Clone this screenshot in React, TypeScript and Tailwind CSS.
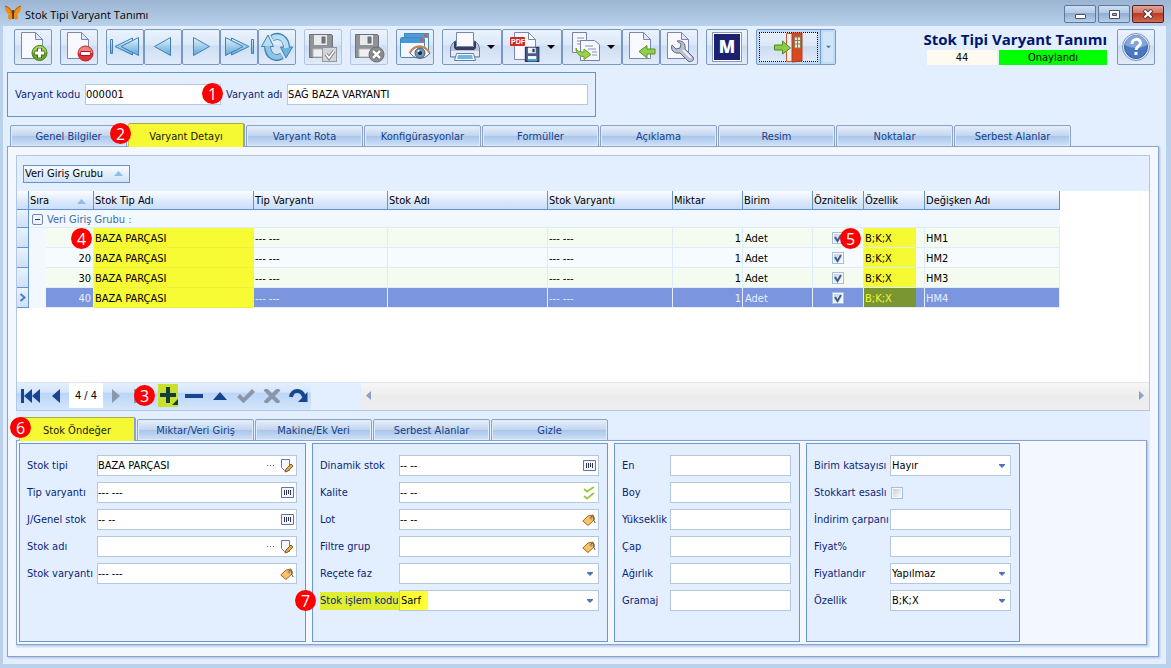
import React, { useState } from 'react';
import clsx from 'clsx';

type Trailing = 'edit' | 'code' | 'tag' | 'check';

interface FieldProps {
    id: string;
    label: string;
    labelWidth: string;
    value?: string;
    trailing?: Trailing;
    options?: string[];
    marked?: boolean;
}

interface VariantRow {
    order: number;
    variable: string;
}

const MAIN_TABS = [
    'Genel Bilgiler',
    'Varyant Detayı',
    'Varyant Rota',
    'Konfigürasyonlar',
    'Formüller',
    'Açıklama',
    'Resim',
    'Noktalar',
    'Serbest Alanlar',
];

const DETAIL_TABS = ['Stok Öndeğer', 'Miktar/Veri Giriş', 'Makine/Ek Veri', 'Serbest Alanlar', 'Gizle'];

const ROWS: VariantRow[] = [
    { order: 10, variable: 'HM1' },
    { order: 20, variable: 'HM2' },
    { order: 30, variable: 'HM3' },
    { order: 40, variable: 'HM4' },
];

const HEADERS = [
    'Stok Tip Adı',
    'Tip Varyantı',
    'Stok Adı',
    'Stok Varyantı',
    'Miktar',
    'Birim',
    'Öznitelik',
    'Özellik',
    'Değişken Adı',
];

/* ---------- Toolbar icons ---------- */

function Svg({ children, w = 32 }: { children: React.ReactNode; w?: number }) {
    return (
        <svg width={w} height="32" viewBox={`0 0 ${w} 32`} fill="none" aria-hidden="true" className="shrink-0">
            {children}
        </svg>
    );
}

function Sheet() {
    return (
        <>
            <path d="M4.500 1.500h14l7 7v19h-21z" fill="#f7f9fe" stroke="#7c86b4" />
            <path d="M18.500 1.500v7h7z" fill="#dfe6f5" stroke="#7c86b4" strokeLinejoin="round" />
        </>
    );
}

function NewIcon() {
    return (
        <Svg>
            <Sheet />
            <circle cx="22.500" cy="22" r="7.500" fill="#6da52c" stroke="#457a16" />
            <path d="M15.500 21.500a7 6.500 0 0 1 14 0z" fill="#a4d05c" />
            <path d="M22.500 17v10M17.500 22h10" stroke="#3c6d14" strokeWidth="5" />
            <path d="M22.500 17.500v9M18 22h9" stroke="#fff" strokeWidth="3" />
        </Svg>
    );
}

function DeleteIcon() {
    return (
        <Svg>
            <Sheet />
            <circle cx="22.500" cy="22.500" r="7.500" fill="#e23238" stroke="#b51f26" />
            <path d="M15.500 22a7 6.500 0 0 1 14 0z" fill="#f58083" />
            <path d="M17.500 22.500h10" stroke="#a1191f" strokeWidth="5" />
            <path d="M18 22.500h9" stroke="#fff" strokeWidth="3" />
        </Svg>
    );
}

function ArrowIcon({ kind }: { kind: 'first' | 'prev' | 'next' | 'last' }) {
    const flip = kind === 'next' || kind === 'last';
    const edge = kind === 'first' || kind === 'last';
    return (
        <Svg>
            <defs>
                <linearGradient id={`arrow-${kind}`} x1="0" y1="0" x2="0" y2="1">
                    <stop offset="0" stopColor="#e2f3fc" />
                    <stop offset="1" stopColor="#5fa6d6" />
                </linearGradient>
            </defs>
            <g
                transform={flip ? 'translate(32 0) scale(-1 1)' : undefined}
                fill={`url(#arrow-${kind})`}
                stroke="#3f80b8"
                strokeLinejoin="round"
            >
                {edge ? (
                    <>
                        <rect x="1.500" y="8.500" width="2" height="14" />
                        <path d="M23.500 7v17L6 15.500z" />
                        <path d="M29.500 6.500v18L12 15.500z" />
                    </>
                ) : (
                    <path d="M23.500 6.500v18L7.500 15.500z" />
                )}
            </g>
        </Svg>
    );
}

function RefreshIcon() {
    return (
        <Svg>
            <path d="M11 7c7-4 14 0 14.500 9" stroke="#3f80b3" strokeWidth="7" />
            <path d="M19.500 16h12L25 27z" fill="#6fb2dd" stroke="#3f80b3" strokeLinejoin="round" />
            <path d="M11.500 7c7-3 13 0 14 10" stroke="#b7def3" strokeWidth="5" />
            <path d="M21 25c-7 4-14 0-14.500-9" stroke="#3f80b3" strokeWidth="7" />
            <path d="M.500 15.500h12L7 4z" fill="#b7def3" stroke="#3f80b3" strokeLinejoin="round" />
            <path d="M20.500 25c-7 3-13 0-14-10" stroke="#8cc5e6" strokeWidth="5" />
        </Svg>
    );
}

function Floppy({ body = '#8f9297', dark = '#6d7076' }) {
    return (
        <>
            <path d="M2.500 3.500h22l1 1v22h-23z" fill={body} stroke={dark} />
            <path d="M7 4h13v10H7z" fill="#e9eaec" />
            <path d="M14.500 5.500h4v7h-4z" fill={dark} />
            <path d="M6 18h16v8H6z" fill="#f0f0f1" stroke="#b5b6b9" />
        </>
    );
}

function SaveIcon({ mark }: { mark: 'ok' | 'cancel' }) {
    return (
        <Svg>
            <Floppy />
            {mark === 'ok' ? (
                <>
                    <rect x="15.500" y="16.500" width="14" height="14" fill="#d3d4d7" stroke="#94969b" />
                    <path d="M19 23l3 4 5-7" stroke="#808288" strokeWidth="3.500" />
                    <path d="M19 23l3 4 5-7" stroke="#fff" strokeWidth="1.500" />
                </>
            ) : (
                <>
                    <circle cx="23.500" cy="23.500" r="7.500" fill="#8b8d91" stroke="#6a6c70" />
                    <path d="M20 20l7 7M27 20l-7 7" stroke="#5f6165" strokeWidth="4" />
                    <path d="M20 20l7 7M27 20l-7 7" stroke="#fff" strokeWidth="2.500" />
                </>
            )}
        </Svg>
    );
}

function PreviewIcon() {
    return (
        <Svg>
            <rect x="5.500" y="2.500" width="24" height="20" fill="#edf4fc" stroke="#4c86ba" />
            <path d="M6 3h23v4H6z" fill="#4d9bd8" />
            <path d="M25 3.500h3v2h-3z" fill="#ee4e2c" />
            <rect x="1.500" y="6.500" width="24" height="20" rx="1" fill="#f4f8fe" stroke="#4c86ba" />
            <path d="M2 7h23v5H2z" fill="#4199dc" />
            <path d="M21 8h3v2h-3z" fill="#ee4e2c" />
            <path d="M11 22c5-8 14-8 20 0-5 7-15 7-20 0z" fill="#fff" stroke="#5c6069" />
            <path d="M10.500 22c5-9 15-9 20 0" stroke="#ca8750" strokeWidth="2" />
            <circle cx="21" cy="22" r="5" fill="#7294b8" stroke="#3b5c82" />
            <circle cx="21" cy="22" r="2" fill="#18263a" />
            <circle cx="19.500" cy="20" r="1" fill="#fff" />
        </Svg>
    );
}

function PrintIcon() {
    return (
        <Svg>
            <path d="M3 13l3-3h20l3 3 1.500 4v9h-29v-9z" fill="#b9c3da" stroke="#6d7aa1" />
            <path d="M2 20h28v5H2z" fill="#e6ebf5" />
            <path d="M7.500 1.500h17v14h-17z" fill="#f7f9fe" stroke="#7885ae" />
            <path d="M5 11l2-1v6h18v-6l2 1v6l-2 2H7l-2-2z" fill="#343e5c" />
            <path d="M7.500 22.500h17l2 7h-21z" fill="#f6f9fe" stroke="#6b7ba5" />
            <path d="M9 24h14l1 4H8z" fill="#6db7e8" />
        </Svg>
    );
}

function PdfIcon() {
    return (
        <Svg>
            <path d="M5.500 1.500h14l7 7v20h-21z" fill="#f7f9fe" stroke="#7c86b4" />
            <path d="M19.500 1.500v7h7z" fill="#fff" stroke="#7c86b4" />
            <rect x="1" y="6" width="15" height="9" rx="1" fill="#d22a28" />
            <text x="2" y="13" fill="#fff" fontSize="7" fontWeight="bold" fontFamily="Liberation Sans, sans-serif">PDF</text>
            <g transform="translate(15 15) scale(.56)">
                <path d="M2.500 2.500h24v25h-24z" fill="#4a5c86" stroke="#26365c" strokeWidth="2" />
                <path d="M7 3h14v10H7z" fill="#f0f3f9" />
                <path d="M15 5h4v6h-4z" fill="#26365c" />
                <path d="M7 18h15v9H7z" fill="#fff" />
                <path d="M7 23h15v4H7z" fill="#49a2dd" />
            </g>
        </Svg>
    );
}

function CopyIcon() {
    return (
        <Svg>
            <path d="M3.500 1.500h14v20h-14z" fill="#f5f7fd" stroke="#7681ad" />
            <path d="M8 7h7M8 10h5M8 13h3" stroke="#8590b5" />
            <path d="M11.500 9.500h14l5 4v16h-19z" fill="#f5f7fd" stroke="#7681ad" />
            <path d="M16 15h8M19 18h8M23 21h5M23 24h5" stroke="#8590b5" />
            <path d="M7 17c1 3 3 4 8 4v-3l7 5.500-7 5v-3c-5 0-8-3-8-8.500z" fill="#9ad04a" stroke="#6a9f2c" strokeLinejoin="round" />
        </Svg>
    );
}

function ImportIcon() {
    return (
        <Svg>
            <Sheet />
            <path d="M14 20.500l8-6v3.500h8v5h-8v4z" fill="#93cf4f" stroke="#568e22" strokeLinejoin="round" />
        </Svg>
    );
}

function WrenchIcon() {
    return (
        <Svg>
            <Sheet />
            <path
                d="M9 14l4 4 4-1 1-4-4-3c5-1 9 2 8 8l8 8c2 3-2 6-5 4l-8-8c-6 1-10-3-8-8z"
                fill="#b9bfd0"
                stroke="#5f6884"
                strokeLinejoin="round"
            />
            <path d="M20 19l8 8" stroke="#eef0f6" strokeWidth="2" />
        </Svg>
    );
}

function ExitIcon() {
    return (
        <Svg>
            <path d="M13.500 2.500h8v28h-8z" fill="#eaf1fb" stroke="#d4552e" />
            <path d="M19 2h10v28l-10 1z" fill="#d54a20" stroke="#b63c18" />
            <path d="M21.500 6h6v11h-6z" fill="#eee9cf" stroke="#8f7a54" />
            <path d="M24.500 6v11M21.500 9.500h6M21.500 13h6" stroke="#8f7a54" />
            <path d="M1.500 14h8v-4l8 7-8 6v-4h-8z" fill="#8ccb45" stroke="#4e8b24" strokeLinejoin="round" />
        </Svg>
    );
}

function HelpIcon() {
    return (
        <Svg>
            <circle cx="16" cy="16" r="13.500" fill="#e4ebf6" stroke="#7d93bd" />
            <circle cx="16" cy="16" r="11.500" fill="#4a78c0" stroke="#3a62a6" />
            <path d="M5 14a11 10 0 0 1 22 0c-7 4-15 4-22 0z" fill="#82a5dc" />
            <path d="M12 13c0-6 8.500-6 8.500-1 0 3.500-4.500 3-4.500 7" stroke="#fff" strokeWidth="3" />
            <path d="M14.500 21h3v3h-3z" fill="#fff" />
        </Svg>
    );
}

function ButterflyIcon() {
    return (
        <svg width="16" height="16" viewBox="0 0 16 16" aria-hidden="true">
            <path d="M8 8C7 4 3 1 0 1c0 4 1 7 4 8-2 2-1 5 1 6 2-1 3-4 3-6 0 2 1 5 3 6 2-1 3-4 1-6 3-1 4-4 4-8-3 0-7 3-8 7z" fill="#f08c14" />
            <path d="M0 1c3 1 6 3 7 7M16 1c-3 1-6 3-7 7" fill="none" stroke="#a35a14" />
            <path d="M8 5v9" stroke="#332010" strokeWidth="1.500" />
        </svg>
    );
}

/* ---------- Small building blocks ---------- */

function Caret({ className = 'text-black' }: { className?: string }) {
    return (
        <svg width="8" height="4" viewBox="0 0 8 4" className={className} aria-hidden="true">
            <path d="M0 0h8L4 4z" fill="currentColor" />
        </svg>
    );
}

function Badge({ n, className }: { n: number; className: string }) {
    return (
        <span
            className={clsx(
                'absolute z-10 flex size-[21px] items-center justify-center rounded-full bg-[#fe0000] font-["Open_Sans",sans-serif] text-[16px] leading-none text-white',
                className
            )}
        >
            {n}
        </span>
    );
}

function ToolButton({
    label,
    children,
    caret,
    disabled,
    className = 'w-[38px]',
}: {
    label: string;
    children: React.ReactNode;
    caret?: boolean;
    disabled?: boolean;
    className?: string;
}) {
    return (
        <button
            type="button"
            aria-label={label}
            title={label}
            disabled={disabled}
            className={clsx(
                'flex h-9 shrink-0 items-center rounded-[2px] border bg-[linear-gradient(#eaf2fd_0%,#dce9f8_45%,#cddef2_46%,#e0ebfa_100%)]',
                caret ? 'justify-between px-[6px]' : 'justify-center',
                disabled ? 'border-[#b3c5e0]' : 'border-[#7b98c4]',
                className
            )}
        >
            {children}
            {caret && <Caret />}
        </button>
    );
}

function TabStrip({
    tabs,
    active,
    onSelect,
    className,
}: {
    tabs: string[];
    active: string;
    onSelect: (tab: string) => void;
    className?: string;
}) {
    return (
        <div role="tablist" className={clsx('relative -mb-px flex h-6 items-end gap-px', className)}>
            {tabs.map((tab) => (
                <button
                    key={tab}
                    type="button"
                    role="tab"
                    aria-selected={tab === active}
                    onClick={() => onSelect(tab)}
                    className={clsx(
                        'w-[117px] shrink-0 rounded-t-[2px] border border-[#8ba3cb]',
                        tab === active
                            ? 'h-6 border-r-2 border-b-0 border-t-[#a9ab48] border-l-[#c7c93e] bg-[#f5f933] pt-0.5 text-[#1a1a10]'
                            : 'h-[22px] bg-[linear-gradient(#e8f0fb_0%,#c3d5ee_48%,#a9c5ea_50%,#cfe1f8_100%)] pt-0.5 text-[#15428b] inset-shadow-[0_0_0_1px_#dfeafa]'
                    )}
                >
                    {tab}
                </button>
            ))}
        </div>
    );
}

function TrailingIcon({ kind }: { kind: Trailing }) {
    if (kind === 'edit') {
        return (
            <svg width="14" height="14" viewBox="0 0 14 14" fill="none" aria-hidden="true">
                <path d="M1.500.5h8v11h-5l-3-3z" fill="#f7f9ff" stroke="#6476ad" />
                <path d="M5 13l1-3 5-5 2 2-5 5z" fill="#e8a845" stroke="#8b5a1c" />
            </svg>
        );
    }
    if (kind === 'code') {
        return (
            <svg width="13" height="11" viewBox="0 0 13 11" fill="none" aria-hidden="true">
                <path d="M.5.500h12v10H.5z" fill="#f2f5fc" stroke="#6273a6" />
                <path d="M3.500 3v5M5.500 3v5M7.500 3v4M9.500 3v5" stroke="#2b3450" />
            </svg>
        );
    }
    if (kind === 'tag') {
        return (
            <svg width="14" height="12" viewBox="0 0 14 12" fill="none" aria-hidden="true">
                <path d="M.8 7L6 2l5-1 1 5-6 5.500z" fill="#f9c36c" stroke="#a8651f" strokeLinejoin="round" />
                <circle cx="9" cy="4" r="1" fill="#fff" stroke="#7a5a30" strokeWidth=".8" />
                <path d="M9 3c2-2 4 0 3 2s1 2 1 4" stroke="#555" />
            </svg>
        );
    }
    return (
        <svg width="14" height="14" viewBox="0 0 14 14" fill="none" aria-hidden="true">
            <path d="M2 3l3 2.500L12 1M2 10l3 2.500L12 7" stroke="#9aca48" strokeWidth="2" />
        </svg>
    );
}

function Field({ id, label, labelWidth, value = '', trailing, options, marked }: FieldProps) {
    return (
        <div className="relative flex h-[21px] items-center">
            <label
                htmlFor={id}
                className={clsx('shrink-0 whitespace-nowrap text-[#0b1f7a]', labelWidth, marked && 'bg-[#e0ee2f] py-0.5')}
            >
                {label}
            </label>
            <div className="flex h-full min-w-0 flex-1 items-center border border-[#b3c7e3] bg-white">
                {options ? (
                    <div className="relative flex h-full w-full items-center">
                        {marked && <span className="absolute inset-y-0 left-0 w-7 bg-[#ffff33]" />}
                        <select
                            id={id}
                            defaultValue={value}
                            className="relative h-full w-full appearance-none bg-transparent pl-px text-black outline-none"
                        >
                            {options.map((o) => (
                                <option key={o}>{o}</option>
                            ))}
                        </select>
                        <svg width="6" height="4" viewBox="0 0 6 4" className="pointer-events-none absolute right-[5px]" aria-hidden="true">
                            <path d="M0 0h6v1L3 4 0 1z" fill="#4a76b5" />
                        </svg>
                    </div>
                ) : (
                    <input id={id} defaultValue={value} className="h-full min-w-0 flex-1 bg-transparent text-black outline-none" />
                )}
                {trailing === 'edit' && (
                    <button type="button" aria-label={`${label} seç`} className="flex w-5 justify-center gap-0.5">
                        <i className="size-px bg-[#4a6a9c]" />
                        <i className="size-px bg-[#4a6a9c]" />
                        <i className="size-px bg-[#4a6a9c]" />
                    </button>
                )}
                {trailing && (
                    <button type="button" aria-label={`${label} aç`} className="mr-0.5 flex w-[14px] justify-center">
                        <TrailingIcon kind={trailing} />
                    </button>
                )}
            </div>
        </div>
    );
}

function FieldGroup({ className, children }: { className: string; children: React.ReactNode }) {
    return (
        <div className={clsx('relative flex flex-col gap-[6px] border border-[#6d95cf] bg-[#e3efff] pt-[11px] pr-2 pb-[30px] pl-[7px]', className)}>
            {children}
        </div>
    );
}

function Check({ id, checked, label }: { id?: string; checked?: boolean; label?: string }) {
    return (
        <span className="relative inline-flex size-3 align-middle">
            <input
                id={id}
                type="checkbox"
                defaultChecked={checked}
                aria-label={label}
                className="peer size-3 appearance-none border border-[#a7bfdf] bg-[linear-gradient(135deg,#c6cad0,#fff)] inset-shadow-[0_0_0_1px_#f6f8fc]"
            />
            <svg viewBox="0 0 12 12" className="pointer-events-none absolute inset-0 hidden peer-checked:block" fill="none" aria-hidden="true">
                <path d="M3 5l2.500 4L9 3" stroke="#3d5f96" strokeWidth="2" />
            </svg>
        </span>
    );
}

/* ---------- Variant grid ---------- */

function VariantTable() {
    return (
        <table className="w-[1043px] table-fixed border-separate border-spacing-0 text-left">
            <colgroup>
                <col className="w-[12px]" />
                <col className="w-[17px]" />
                <col className="w-[48px]" />
                <col className="w-[160px]" />
                <col className="w-[134px]" />
                <col className="w-[160px]" />
                <col className="w-[125px]" />
                <col className="w-[70px]" />
                <col className="w-[70px]" />
                <col className="w-[51px]" />
                <col className="w-[61px]" />
                <col className="w-[135px]" />
            </colgroup>
            <thead>
                <tr className="h-[19px] bg-[linear-gradient(#fbfdff,#d9e7fb_60%,#c6dcf9)]">
                    <th className="border-r border-b border-[#6593cf]" />
                    <th colSpan={2} className="border-r border-b border-[#6593cf] p-0 pt-0.5 pl-px font-normal">
                        <div className="flex items-center justify-between pr-[7px]">
                            Sıra
                            <svg width="9" height="5" viewBox="0 0 9 5" aria-hidden="true">
                                <path d="M0 5h9L4.500 0z" fill="#8fbbea" />
                            </svg>
                        </div>
                    </th>
                    {HEADERS.map((h) => (
                        <th key={h} className="border-r border-b border-[#6593cf] p-0 pt-0.5 pl-px font-normal whitespace-nowrap">
                            {h}
                        </th>
                    ))}
                </tr>
            </thead>
            <tbody>
                <tr className="h-[18px]">
                    <td className="border-r border-b border-[#6593cf] bg-[linear-gradient(#e9f2fe,#cfe0f8)]" />
                    <td colSpan={11} className="border-b border-[#e0ebf9] bg-[#f1f8ff] p-0 pt-0.5 text-[#3f6ba5]">
                        <div className="flex items-center gap-[4px] pl-[3px]">
                            <button
                                type="button"
                                aria-label="Grubu daralt"
                                className="flex size-[11px] items-center justify-center rounded-[2px] border border-[#7487a8] bg-[#eef3fa]"
                            >
                                <i className="h-px w-[5px] bg-[#2b3c5c]" />
                            </button>
                            Veri Giriş Grubu :
                        </div>
                    </td>
                </tr>
                {ROWS.map((row, i) => {
                    const selected = row.order === 40;
                    const base = clsx(
                        'border-r border-b',
                        selected ? 'border-[#e3efff] bg-[#7b96df] text-[#e9effc]' : 'border-[#e0ebf9]',
                        !selected && (i % 2 ? 'bg-[#f5fbff]' : 'bg-[#f4fcf1]')
                    );
                    const cell = clsx(base, 'px-px pt-0.5 pb-0');
                    return (
                        <tr key={row.order} className="h-5">
                            <td className="border-r border-b border-[#6593cf] bg-[linear-gradient(#e9f2fe,#cfe0f8)] p-0">
                                {selected && (
                                    <svg width="8" height="9" viewBox="0 0 8 9" fill="none" className="ml-0.5" aria-hidden="true">
                                        <path d="M1.500 1l4 3.500-4 3.500" stroke="#4a80c6" strokeWidth="2" />
                                    </svg>
                                )}
                            </td>
                            <td className="bg-[#f1f8ff]" />
                            <td className={clsx(cell, 'relative text-right')}>
                                {i === 0 ? (
                                    <Badge n={4} className="top-0 right-px" />
                                ) : (
                                    <span className="pr-px">{row.order}</span>
                                )}
                            </td>
                            <td className="border-b border-[#eef03a] bg-[#f7fb33] p-0 pt-0.5 pl-px text-black">BAZA PARÇASI</td>
                            <td className={cell}>--- ---</td>
                            <td className={cell} />
                            <td className={cell}>--- ---</td>
                            <td className={clsx(cell, 'text-right')}>1</td>
                            <td className={clsx(cell, 'pl-0.5')}>Adet</td>
                            <td className={clsx(base, 'relative p-0 text-center leading-none')}>
                                <Check checked label={`Öznitelik ${row.order}`} />
                                {i === 0 && <Badge n={5} className="top-0 right-[2px]" />}
                            </td>
                            <td className={clsx(base, 'p-0')}>
                                <div
                                    className={clsx(
                                        'flex h-[19px] w-[52px] items-center pt-0.5 pl-px',
                                        selected ? 'bg-[#7a9632] text-[#f2f633]' : 'bg-[#f5fa32]'
                                    )}
                                >
                                    B;K;X
                                </div>
                            </td>
                            <td className={cell}>{row.variable}</td>
                        </tr>
                    );
                })}
            </tbody>
        </table>
    );
}

function Navigator() {
    const btn = 'relative flex h-full w-[26px] items-center justify-center';
    return (
        <div className="flex h-7 border-t border-[#dde5f0]">
            <div className="relative flex w-[294px] shrink-0 items-center bg-[linear-gradient(#e4effd_0%,#d5e5fa_35%,#b9d5f8_36%,#d5e6fb_100%)] pb-0.5 text-[#17458f]">
                <button type="button" aria-label="İlk kayıt" className={btn}>
                    <svg width="19" height="14" viewBox="0 0 19 14" fill="currentColor"><path d="M0 0h3v14H0zM11 0v14L3 7zM19 0v14l-8-7z" /></svg>
                </button>
                <button type="button" aria-label="Önceki kayıt" className={btn}>
                    <svg width="8" height="14" viewBox="0 0 8 14" fill="currentColor"><path d="M8 0v14L0 7z" /></svg>
                </button>
                <span className="flex h-full w-[34px] items-center justify-center bg-white text-black">4 / 4</span>
                <button type="button" aria-label="Sonraki kayıt" className={clsx(btn, 'text-[#8a97ab]')}>
                    <svg width="8" height="14" viewBox="0 0 8 14" fill="currentColor"><path d="M0 0v14l8-7z" /></svg>
                </button>
                <button type="button" aria-label="Son kayıt" className={clsx(btn, 'text-[#8a97ab]')}>
                    <svg width="17" height="14" viewBox="0 0 17 14" fill="currentColor"><path d="M0 0h2v14H0zM2 0v14l7-7z" /></svg>
                    <Badge n={3} className="top-0.5 left-[5px]" />
                </button>
                <button type="button" aria-label="Ekle" className={btn}>
                    <span className="flex h-[23px] w-5 items-center justify-center bg-[#c9e02e] text-[#123f3c]">
                        <svg width="19" height="18" viewBox="0 0 19 18" fill="currentColor"><path d="M7 0h4v6h6v4h-6v6H7v-6H1V6h6zM19 12v6h-6z" /></svg>
                    </span>
                </button>
                <button type="button" aria-label="Sil" className={btn}>
                    <svg width="18" height="4" viewBox="0 0 18 4" fill="currentColor"><path d="M0 0h18v4H0z" /></svg>
                </button>
                <button type="button" aria-label="Düzenle" className={btn}>
                    <svg width="14" height="8" viewBox="0 0 14 8" fill="currentColor"><path d="M0 8h14L7 0z" /></svg>
                </button>
                <button type="button" aria-label="Onayla" className={clsx(btn, 'text-[#8a97ab]')}>
                    <svg width="18" height="14" viewBox="0 0 18 14" fill="none"><path d="M1.500 6.500l5 5 10-10" stroke="currentColor" strokeWidth="4" /></svg>
                </button>
                <button type="button" aria-label="İptal" className={clsx(btn, 'text-[#8a97ab]')}>
                    <svg width="18" height="14" viewBox="0 0 18 14" fill="none"><path d="M2 0l14 14M16 0L2 14" stroke="currentColor" strokeWidth="4" /></svg>
                </button>
                <button type="button" aria-label="Yenile" className={btn}>
                    <svg width="19" height="13" viewBox="0 0 19 13"><path d="M2 8c1-8 11-8 13 0" fill="none" stroke="currentColor" strokeWidth="4" /><path d="M18.500 3v10H9z" fill="currentColor" /></svg>
                </button>
            </div>
            <div className="w-[50px] shrink-0 bg-[#e3efff]" />
            <div className="flex min-w-0 flex-1 items-center justify-between bg-[linear-gradient(#f7f7f7,#ececec_50%,#eeeeee)] px-[5px] pb-0.5 text-[#8d9fc8]">
                <svg width="5" height="9" viewBox="0 0 5 9" fill="currentColor" aria-hidden="true"><path d="M5 0v9L0 4.500z" /></svg>
                <svg width="5" height="9" viewBox="0 0 5 9" fill="currentColor" aria-hidden="true"><path d="M0 0v9l5-4.500z" /></svg>
            </div>
        </div>
    );
}

function TitleBar() {
    const base = 'flex h-[18px] w-8 items-center justify-center rounded-[2px] border';
    return (
        <header className="flex h-[26px] items-center gap-1 bg-[linear-gradient(#9ab4d2,#b9d1ea)] pr-[7px] pl-[5px]">
            <ButterflyIcon />
            <h1 className="flex-1 pt-1 font-['Open_Sans',sans-serif] text-[11px] text-black">Stok Tipi Varyant Tanımı</h1>
            <div className="flex gap-0.5 pt-0.5">
                <button type="button" aria-label="Simge durumuna küçült" className={clsx(base, 'border-[#5a7ba8] bg-[linear-gradient(#d0dff0_0%,#b2c8e2_45%,#8faed1_46%,#b7cfe9_100%)]')}>
                    <span className="mt-1 h-[5px] w-[11px] rounded-[1px] border border-[#4c5260] bg-white" />
                </button>
                <button type="button" aria-label="Ekranı kapla" className={clsx(base, 'border-[#5a7ba8] bg-[linear-gradient(#d0dff0_0%,#b2c8e2_45%,#8faed1_46%,#b7cfe9_100%)]')}>
                    <svg width="11" height="9" viewBox="0 0 11 9" fill="none"><path d="M.5.500h10v8H.5z" fill="#fff" stroke="#4c5260" /><path d="M3.500 3.500h4v2h-4z" fill="#8faed1" stroke="#4c5260" /></svg>
                </button>
                <button type="button" aria-label="Kapat" className={clsx(base, 'border-[#5e1f1b] bg-[linear-gradient(#e2a497_0%,#cf7264_45%,#b93b28_46%,#cf6b50_100%)]')}>
                    <svg width="12" height="10" viewBox="0 0 12 10" fill="none"><path d="M2 1l8 8M10 1L2 9" stroke="#4c3a40" strokeWidth="4" /><path d="M2.500 1.500l7 7M9.500 1.500l-7 7" stroke="#fff" strokeWidth="2" /></svg>
                </button>
            </div>
        </header>
    );
}

function Toolbar() {
    return (
        <div className="flex items-start gap-2 px-[11px] pt-[3px]">
            <ToolButton label="Yeni"><NewIcon /></ToolButton>
            <ToolButton label="Sil"><DeleteIcon /></ToolButton>
            <div className="flex">
                <ToolButton label="İlk"><ArrowIcon kind="first" /></ToolButton>
                <ToolButton label="Önceki"><ArrowIcon kind="prev" /></ToolButton>
                <ToolButton label="Sonraki"><ArrowIcon kind="next" /></ToolButton>
                <ToolButton label="Son"><ArrowIcon kind="last" /></ToolButton>
                <ToolButton label="Yenile"><RefreshIcon /></ToolButton>
            </div>
            <ToolButton label="Kaydet" disabled><SaveIcon mark="ok" /></ToolButton>
            <ToolButton label="Vazgeç" disabled><SaveIcon mark="cancel" /></ToolButton>
            <ToolButton label="Önizleme"><PreviewIcon /></ToolButton>
            <div className="flex">
                <ToolButton label="Yazdır" caret className="w-[60px]"><PrintIcon /></ToolButton>
                <ToolButton label="PDF kaydet" caret className="w-[60px]"><PdfIcon /></ToolButton>
                <ToolButton label="Kopyala" caret className="w-[60px]"><CopyIcon /></ToolButton>
                <ToolButton label="İçe aktar"><ImportIcon /></ToolButton>
                <ToolButton label="Ayarlar"><WrenchIcon /></ToolButton>
            </div>
            <ToolButton label="M" className="w-[42px]">
                <span className="flex size-[30px] items-center justify-center border border-[#8a96bd] bg-white">
                    <span className="flex size-[26px] items-center justify-center bg-[#1b2170] font-['Open_Sans',sans-serif] text-[17px] font-extrabold text-white">M</span>
                </span>
            </ToolButton>
            <div className="flex h-9 rounded-[2px] border border-[#7b98c4] bg-[#bcdcf8]">
                <button
                    type="button"
                    aria-label="Çıkış"
                    className="m-0.5 flex w-[59px] items-center justify-center border border-dotted border-black bg-[linear-gradient(#e6effb_0%,#dbe7f7_45%,#cadbf0_46%,#dfeaf9_100%)]"
                >
                    <ExitIcon />
                </button>
                <button type="button" aria-label="Çıkış seçenekleri" className="flex w-[15px] items-center justify-center border-l border-[#7b98c4] bg-[#d3e5f8] inset-shadow-[0_0_0_2px_#bcdcf8]">
                    <Caret className="w-[5px] text-[#4a76b5]" />
                </button>
            </div>
            <div className="mr-0.5 ml-auto flex flex-col items-end">
                <h2 className="font-['Open_Sans',sans-serif] text-[15px] leading-[21px] font-bold whitespace-nowrap text-[#00156e]">
                    Stok Tipi Varyant Tanımı
                </h2>
                <div className="flex gap-0.5 text-center leading-[15px] text-black">
                    <span className="w-[70px] bg-[#fffaf0]">44</span>
                    <span className="w-[108px] bg-[#00ff00]">Onaylandı</span>
                </div>
            </div>
            <ToolButton label="Yardım"><HelpIcon /></ToolButton>
        </div>
    );
}

export default function App() {
    const [mainTab, setMainTab] = useState('Varyant Detayı');
    const [detailTab, setDetailTab] = useState('Stok Öndeğer');

    return (
        <div className="flex min-h-screen flex-col bg-[#b9d1ea] font-['DejaVu_Sans_Condensed','DejaVu_Sans',sans-serif] text-[11px] leading-[14px] text-black">
            <TitleBar />
            <main className="mr-[5px] mb-1 ml-[3px] flex flex-1 flex-col bg-[#e3efff]">
                <Toolbar />

                {/* Variant code and name */}
                <section className="mt-[7px] ml-1 flex h-[45px] w-[589px] items-center border border-[#6593cf] px-[7px] text-[#0b1f7a]">
                    <label htmlFor="kod" className="w-[70px]">Varyant kodu</label>
                    <div className="relative h-[21px] w-[136px]">
                        <input id="kod" defaultValue="000001" className="h-full w-full border border-[#b3c7e3] bg-white text-black outline-none" />
                        <Badge n={1} className="top-[-1px] right-[-2px]" />
                    </div>
                    <label htmlFor="ad" className="ml-[5px] w-[61px] whitespace-nowrap">Varyant adı</label>
                    <input id="ad" defaultValue="SAĞ BAZA VARYANTI" className="h-[21px] min-w-0 flex-1 border border-[#b3c7e3] bg-white text-black outline-none" />
                </section>

                <div className="relative mt-[6px] ml-[7px]">
                    <TabStrip tabs={MAIN_TABS} active={mainTab} onSelect={setMainTab} />
                    <Badge n={2} className="top-0 left-[100px]" />
                </div>

                <section className="mr-[7px] mb-[7px] ml-1 flex flex-1 flex-col border border-[#8ba3cb] bg-[#f3f8ff] p-2 shadow-[1px_1px_2px_#a9bfe0]">
                    <div className="flex flex-1 flex-col bg-[#e3efff]">
                        {/* Grid */}
                        <div className="flex flex-1 flex-col border border-[#b3c7e3] bg-white">
                            <div className="flex h-[35px] items-center bg-[#e3efff] pl-[6px]">
                                <button
                                    type="button"
                                    className="flex h-[18px] w-[107px] items-center justify-between border border-[#6593cf] bg-[linear-gradient(#f8fbff,#d0e2fa)] pr-[6px] pl-px whitespace-nowrap"
                                >
                                    Veri Giriş Grubu
                                    <svg width="9" height="5" viewBox="0 0 9 5" aria-hidden="true">
                                        <path d="M0 5h9L4.500 0z" fill="#8fbbea" />
                                    </svg>
                                </button>
                            </div>
                            <div className="flex-1 overflow-hidden">
                                <VariantTable />
                            </div>
                            <Navigator />
                        </div>

                        <div className="relative mt-[6px] ml-[3px]">
                            <TabStrip tabs={DETAIL_TABS} active={detailTab} onSelect={setDetailTab} />
                            <Badge n={6} className="top-0 left-[-9px]" />
                        </div>

                        {/* Detail panel */}
                        <div className="mr-[3px] mb-[3px] flex gap-[6px] border border-[#8ba3cb] bg-[#f3f8ff] p-0.5 shadow-[1px_1px_2px_#a9bfe0]">
                            <FieldGroup className="w-[287px] shrink-0">
                                <Field id="stok-tipi" label="Stok tipi" labelWidth="w-[70px]" value="BAZA PARÇASI" trailing="edit" />
                                <Field id="tip-varyanti" label="Tip varyantı" labelWidth="w-[70px]" value="--- ---" trailing="code" />
                                <Field id="genel-stok" label="J/Genel stok" labelWidth="w-[70px]" value="-- --" trailing="code" />
                                <Field id="stok-adi" label="Stok adı" labelWidth="w-[70px]" trailing="edit" />
                                <Field id="stok-varyanti" label="Stok varyantı" labelWidth="w-[70px]" value="--- ---" trailing="tag" />
                            </FieldGroup>
                            <FieldGroup className="w-[296px] shrink-0">
                                <Field id="dinamik" label="Dinamik stok" labelWidth="w-[79px]" value="-- --" trailing="code" />
                                <Field id="kalite" label="Kalite" labelWidth="w-[79px]" value="-- --" trailing="check" />
                                <Field id="lot" label="Lot" labelWidth="w-[79px]" value="-- --" trailing="tag" />
                                <Field id="filtre" label="Filtre grup" labelWidth="w-[79px]" trailing="tag" />
                                <Field id="recete" label="Reçete faz" labelWidth="w-[79px]" options={['']} />
                                <Field id="islem" label="Stok işlem kodu" labelWidth="w-[79px]" value="Sarf" options={['Sarf']} marked />
                                <Badge n={7} className="bottom-[30px] left-[-18px]" />
                            </FieldGroup>
                            <FieldGroup className="w-[186px] shrink-0">
                                <Field id="en" label="En" labelWidth="w-[48px]" />
                                <Field id="boy" label="Boy" labelWidth="w-[48px]" />
                                <Field id="yukseklik" label="Yükseklik" labelWidth="w-[48px]" />
                                <Field id="cap" label="Çap" labelWidth="w-[48px]" />
                                <Field id="agirlik" label="Ağırlık" labelWidth="w-[48px]" />
                                <Field id="gramaj" label="Gramaj" labelWidth="w-[48px]" />
                            </FieldGroup>
                            <FieldGroup className="w-[214px] shrink-0">
                                <Field id="katsayi" label="Birim katsayısı" labelWidth="w-[76px]" value="Hayır" options={['Hayır', 'Evet']} />
                                <div className="flex h-[21px] items-center">
                                    <label htmlFor="esasli" className="w-[77px] whitespace-nowrap text-[#0b1f7a]">Stokkart esaslı</label>
                                    <Check id="esasli" />
                                </div>
                                <Field id="carpan" label="İndirim çarpanı" labelWidth="w-[76px]" />
                                <Field id="fiyat" label="Fiyat%" labelWidth="w-[76px]" />
                                <Field id="fiyatlandir" label="Fiyatlandır" labelWidth="w-[76px]" value="Yapılmaz" options={['Yapılmaz', 'Yapılır']} />
                                <Field id="ozellik" label="Özellik" labelWidth="w-[76px]" value="B;K;X" options={['B;K;X']} />
                            </FieldGroup>
                        </div>
                    </div>
                </section>
            </main>
        </div>
    );
}
